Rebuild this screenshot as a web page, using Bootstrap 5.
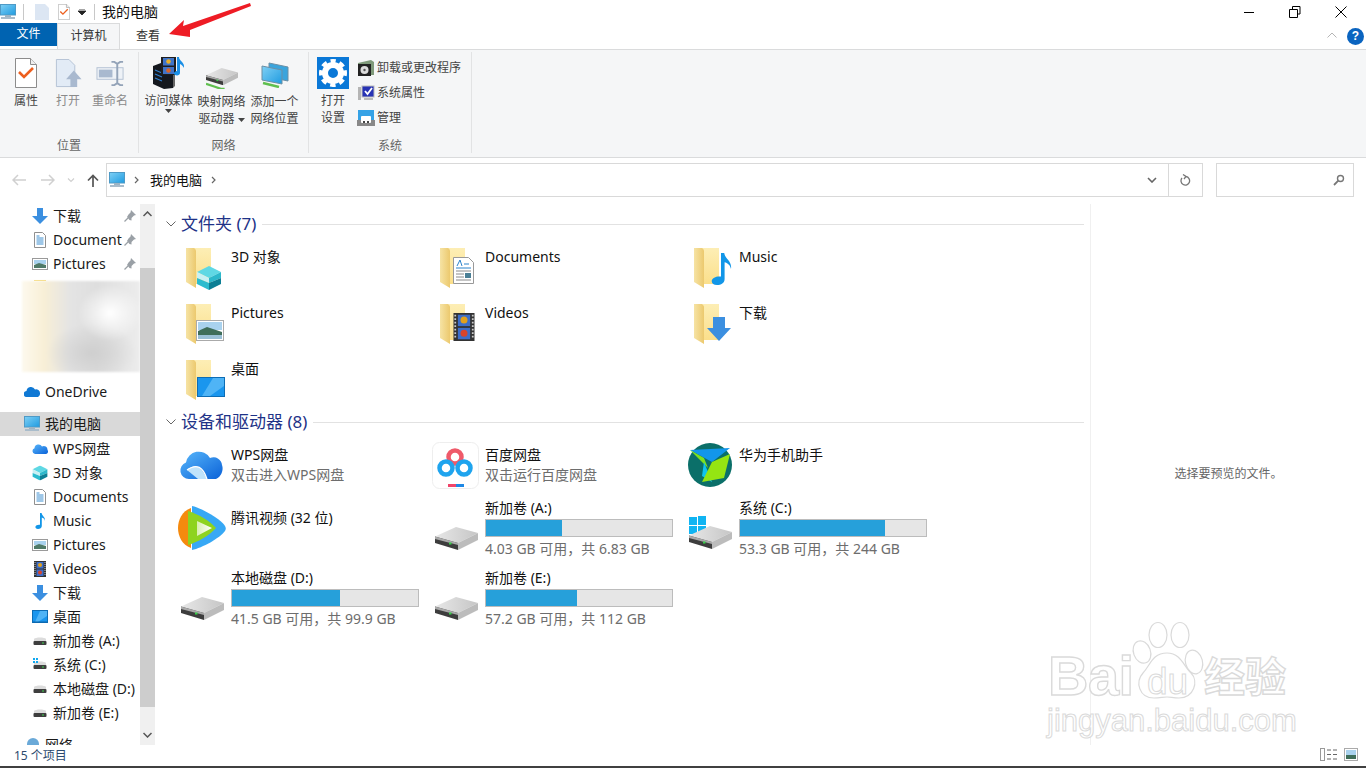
<!DOCTYPE html>
<html lang="zh-CN"><head><meta charset="utf-8"><title>我的电脑</title>
<link href="https://cdn.jsdelivr.net/npm/bootstrap@5.3.0/dist/css/bootstrap.min.css" rel="stylesheet">
<style>
html,body{height:100%;overflow:hidden;background:#fff}
body{font-family:"Noto Sans","Noto Sans CJK SC",sans-serif;font-size:14px;color:#111;line-height:20px}
.shell{width:1366px;height:768px;position:relative;overflow:hidden}
.ttl{height:24px;font-size:14px}
.ttl svg{flex:none}
.qat-sep{width:1px;height:16px;background:#c8c8c8;flex:none}
.q-a{margin-left:7px}.q-b{margin-left:11px}.q-c{margin-left:8px}.q-d{margin-left:7px}.q-e{margin-left:8px}.q-f{margin-left:7px}
.cap-m{margin-left:auto;margin-right:34px}.cap-x{margin-left:34px}.cap-end{width:19px}
.tabs{height:26px;border-bottom:1px solid #dadbdc;font-size:12px}
.tab-file{width:57px;height:23px;background:#0063b1;color:#fff;text-align:center;line-height:22px;margin-top:-1px}
.tab-on{width:63px;height:26px;background:#f5f6f7;border:1px solid #dadbdc;border-bottom:0;text-align:center;line-height:24px;color:#333;position:relative;z-index:1;margin-top:-1px}
.tab-off{width:56px;text-align:center;line-height:24px;color:#333}
.help{width:17px;height:17px;border-radius:50%;background:#0a64c0;color:#fff;font:700 12px/17px "Liberation Sans",sans-serif;text-align:center;margin:0 2px 0 10px}
.rib{height:108px;background:#f5f6f7;border-bottom:1px solid #dadbdc;font-size:12px;line-height:17px;color:#444}
.rgrp{height:101px;border-right:1px solid #e2e3e4;margin-top:2px;position:relative}
.rgrp-cap{position:absolute;left:0;right:0;bottom:-1px;text-align:center;color:#666}
.rbtn{text-align:center;flex:none}
.rico{height:37px;margin-top:3px}
.rico svg{display:block;margin:0 auto}
.pad1{padding-top:1px}.pad2{padding-top:2px}.pad3{padding-top:3px}.pad4{padding-top:4px}.pad7{padding-top:7px}.pad13{padding-top:13px}
.dim{color:#8a8a8a}
.w42{width:42px}.w53{width:53px}.w40{width:40px}
.rg1{width:139px;padding-left:5px}.rg2{width:170px;padding-left:3px}.rg3{width:163px;padding-left:4px}
.rsm-col{margin-left:4px;padding-top:3px}
.rsm{height:25px;gap:2px;white-space:nowrap}
.rb-tx{margin-top:1px}
.caret-b{display:block;margin:0 auto}
.caret-i{display:inline;vertical-align:middle}
.nav-row{height:46px;padding-top:5px}
.nv{width:101px;height:34px;padding-left:12px}.nv svg{flex:none}.nv svg:nth-child(2){margin-left:15px}.nv svg:nth-child(3){margin-left:12px}.nv svg:nth-child(4){margin-left:12px}
.addr{height:34px;width:1097px;margin-left:5px;border:1px solid #d9d9d9;font-size:13px}
.a-pc{margin-left:1px}.a-ch{margin-left:8px}.a-t{margin-left:11px}.a-ch2{margin-left:9px}.a-dd{margin-left:auto;margin-right:11px}
.addr-end{width:34px;height:32px;border-left:1px solid #d9d9d9}
.srch{height:34px;width:138px;margin-left:13px;border:1px solid #d9d9d9}
.work{height:541px;overflow:hidden}
.tree{width:140px;flex:none;overflow:hidden;color:#1a1a1a}
.trow{height:24px;line-height:24px;padding-left:32px;gap:5px;white-space:nowrap;overflow:hidden;position:relative}
.trow svg{flex:none}
.lvl1{padding-left:24px}
.sel{background:#d9d9d9}
.mt-px{margin-top:1px}
.pin{position:absolute;left:123px;top:5px;background:#fff}
.sliver{height:1px;width:12px;margin:4px 0 0 34px;background:#f5d76e}
.blur-box{height:91px;margin:0 0 8px 22px;background:radial-gradient(ellipse 32px 28px at 88px 32px,#fff,transparent),radial-gradient(ellipse 45px 30px at 70px 72px,#cfcfcf,transparent),linear-gradient(90deg,#fdf9ee 0,#f8efd6 22px,#e4e4e4 48px,#dedede 75px,#ececec 117px);filter:blur(1px)}
.sbar{width:15px;flex:none;background:#f0f0f0;margin-right:1px;position:relative}
.sthumb{height:439px;margin-top:64px;background:#cdcdcd}
.sarrow{position:absolute;left:3px}
.t-a{top:7px}.b-a{bottom:7px}
.main{width:934px;flex:none;padding-top:10px}
.grp-h{height:20px;font-size:17px;color:#1e3287;line-height:20px;white-space:nowrap}
.hch{margin:0 5px 0 10px}
.grp-line{height:1px;background:#e2e2e2;flex:1;margin:0 6px}
.ftiles{display:grid;grid-template-columns:repeat(3,254px);grid-auto-rows:56px;margin:10px 0 0 22px}
.dtiles{display:grid;grid-template-columns:repeat(3,254px);grid-template-rows:58px 70px 70px;margin:8px 0 0 22px}
.itm{display:flex;min-width:0}
.itm>svg{flex:none}
.itm-t{padding-top:3px;color:#111}
.itm-d{width:188px}
.sub{color:#6d6d6d}
.pbar{height:18px;background:#e6e6e6;border:1px solid #bcbcbc;margin:1px 0 2px}
.pfill{height:100%;background:#26a0da}
.ptop{padding-top:5px}
.ptop2{padding-top:10px}
.preview{flex:1;border-left:1px solid #f0f0f0;font-size:12px;color:#666;padding-bottom:2px}
.stat{height:21px;font-size:12px;line-height:21px;color:#2c4a6e;padding-left:14px;position:relative}
.base{height:2px;background:#404040}
.ovl{position:absolute;pointer-events:none}
.wm{left:1040px;top:620px;width:270px;height:125px}
.wm span{position:absolute;color:#fff;-webkit-text-stroke:1.4px #dadada;font-family:"Liberation Sans",sans-serif;font-weight:700;line-height:1}
.wm .wm-bai{left:8px;top:32px;font-size:56px;letter-spacing:-.5px;line-height:.85}
.wm .wm-du{left:107px;top:43px;font-size:37px;font-weight:400;-webkit-text-stroke:1px #dadada}
.wm .wm-cn{left:164px;top:30px;font-size:41px;font-family:"Noto Sans CJK SC",sans-serif;line-height:1.2}
.wm .wm-url{left:7px;top:85px;font-size:31px;font-weight:400;-webkit-text-stroke:1px #dadada}
.arrow{left:165px;top:0}
.vsw{position:absolute;left:1320px;top:3px}
</style></head><body>
<svg width="0" height="0" class="position-absolute">
<defs>
<linearGradient id="gSc" x1="0" y1="0" x2="1" y2="1"><stop offset="0" stop-color="#7fd0f5"/><stop offset="1" stop-color="#1f9be0"/></linearGradient>
<linearGradient id="gFo" x1="0" y1="0" x2="1" y2="0"><stop offset="0" stop-color="#f6e3a4"/><stop offset="1" stop-color="#ecc96e"/></linearGradient>
<linearGradient id="gFl" x1="0" y1="0" x2="0" y2="1"><stop offset="0" stop-color="#fdeeb5"/><stop offset="1" stop-color="#fbdf8b"/></linearGradient>
<linearGradient id="gWps" x1="0" y1="0" x2="1" y2="1"><stop offset="0" stop-color="#58b7fb"/><stop offset="1" stop-color="#0b62d8"/></linearGradient>
<linearGradient id="gDr" x1="0" y1="0" x2="1" y2="0"><stop offset="0" stop-color="#e7e7e7"/><stop offset="1" stop-color="#c6c6c6"/></linearGradient>
<linearGradient id="gPlay" x1="0" y1="0" x2="1" y2="0"><stop offset="0" stop-color="#d9efb0"/><stop offset="1" stop-color="#fff"/></linearGradient>
</defs>
<symbol id="pc" viewBox="0 0 16 16"><rect x="0.5" y="0.5" width="15" height="10.5" fill="url(#gSc)" stroke="#4f9ac6"/><rect x="5" y="11" width="6" height="2" fill="#9db4c4"/><rect x="1" y="13" width="14" height="2" fill="#a9bccb"/></symbol>
<symbol id="doc" viewBox="0 0 16 16"><path d="M2.5.5h8l3 3v12h-11z" fill="#fff" stroke="#8f8f8f"/><path d="M4.5 4h3M4.5 6h7M4.5 8h7M4.5 10h7M4.5 12h7" stroke="#3f8fd0"/></symbol>
<symbol id="pics" viewBox="0 0 16 16"><rect x=".5" y="2.5" width="15" height="11" fill="#fff" stroke="#9a9a9a"/><rect x="2" y="4" width="12" height="4" fill="#a9d2ee"/><path d="M2 9l5-2 7 2v3H2z" fill="#4f7a68"/></symbol>
<symbol id="down" viewBox="0 0 16 16"><path d="M5 0h6v8h5l-8 8-8-8h5z" fill="#3b8fe0"/></symbol>
<symbol id="music" viewBox="0 0 16 16"><path d="M8 0h1.6c.4 3 4 4 3.4 8-.3-2-1.800-3-3.200-3.400V13c0 2-1.800 3-3.800 3-1.800 0-2.800-1-2.600-2.200.3-1.400 2.400-2.400 4.600-2z" fill="#1296e8"/></symbol>
<symbol id="film" viewBox="0 0 16 16"><rect x="2" y="0" width="12" height="16" fill="#333"/><rect x="4.500" y="1" width="7" height="6.500" fill="#3d6ec9"/><rect x="4.500" y="8.500" width="7" height="6.500" fill="#3d6ec9"/><circle cx="8" cy="4" r="2" fill="#e3a11b"/><circle cx="8" cy="11.500" r="2" fill="#d8442b"/><path d="M3 1v14M13 1v14" stroke="#ccc" stroke-dasharray="1 1"/></symbol>
<symbol id="desk" viewBox="0 0 16 16"><rect x=".5" y="1.500" width="15" height="12" fill="#1a96ee" stroke="#0d6db5"/><path d="M8 2h7v5l-9 6H3z" fill="#4fb4f6"/><rect x="1" y="12.500" width="14" height="1" fill="#0c67ab"/></symbol>
<symbol id="cube" viewBox="0 0 26 24"><path d="M13 0l12 6-12 6L1 6z" fill="#5fd8e4"/><path d="M1 6l12 6v5L1 12z" fill="#c8f0f3"/><path d="M25 6l-12 6v5l12-5z" fill="#2cb8cb"/><path d="M1 12l12 5v7L1 18z" fill="#2bbccf"/><path d="M25 12l-12 5v7l12-6z" fill="#0c7f95"/></symbol>
<symbol id="folder" viewBox="0 0 25 40"><path d="M0 0h25v36H9z" fill="url(#gFl)"/><path d="M0 0h8c-.5 0 2 1 2 3v37L0 34z" fill="url(#gFo)"/></symbol>
<symbol id="drvb" viewBox="0 0 43 23"><path d="M0 9.500L21 0l22 6-20 10z" fill="url(#gDr)"/><path d="M0 9.500l23 6.500v7L0 16z" fill="#3d3d3d"/><path d="M0 9.500l23 6.500v2L0 12z" fill="#a9a9a9"/><path d="M23 16l20-10v7L23 23z" fill="#bcbcbc"/><rect x="14" y="15.500" width="2.500" height="2" fill="#38d04a"/></symbol>
<symbol id="drvs" viewBox="0 0 16 16"><path d="M2 6c1-2 11-2 12 0v2H2z" fill="#dcdcdc"/><rect x="1.500" y="8" width="13" height="4" rx="1" fill="#3e3e3e"/><rect x="10" y="9.500" width="2" height="1" fill="#3fd24e"/></symbol>
<symbol id="pinx" viewBox="0 0 14 14"><path d="M8 1l5 5-2 .5-2.500 2.500 0 2.500-2-.5L4 8 5.500 5.500 7.500 3.500z" fill="#9aa0a6"/><path d="M5 9l-3.500 3.500" stroke="#9aa0a6" stroke-width="1.300"/></symbol>
<symbol id="chk" viewBox="0 0 22 30"><path d="M.5.500h15l6 6v23H.500z" fill="#fff" stroke="#8c8c8c"/><path d="M15.500.5v6h6" fill="#eee" stroke="#8c8c8c"/><path d="M4 14l5 5 9-9" fill="none" stroke="#ed5f1e" stroke-width="2.600"/></symbol>
</svg>
<div class="shell d-flex flex-column">
 <div class="ttl d-flex align-items-center">
  <svg width="16" height="16"><use href="#pc"/></svg>
  <span class="qat-sep q-a"></span>
  <svg width="14" height="16" class="q-b" viewBox="0 0 14 16"><path d="M0 0h10l4 4v12H0z" fill="#dce6f3"/></svg>
  <svg width="14" height="16" class="q-c" viewBox="0 0 22 30"><use href="#chk" width="22" height="30"/></svg>
  <svg width="8" height="6" class="q-d" viewBox="0 0 8 6"><path d="M1 0h6M0 2h8l-4 4z" stroke="#222" stroke-width=".8" fill="#222"/></svg>
  <span class="qat-sep q-e"></span>
  <span class="q-f">我的电脑</span>
  <svg class="cap-m" width="11" height="11" viewBox="0 0 11 11"><path d="M0 5.500h10" stroke="#000"/></svg>
  <svg width="12" height="12" viewBox="0 0 12 12"><path d="M3.500 3V.5h7.500v7.500H8.500M.5 3.500h8v8h-8z" fill="none" stroke="#000"/></svg>
  <svg class="cap-x" width="12" height="12" viewBox="0 0 12 12"><path d="M.5.500l11 11M11.500.500l-11 11" stroke="#000"/></svg>
  <span class="cap-end"></span>
 </div>
 <div class="tabs d-flex align-items-start">
  <div class="tab-file">文件</div><div class="tab-on">计算机</div><div class="tab-off">查看</div>
  <svg class="ms-auto mt-2" width="10" height="6" viewBox="0 0 10 6"><path d="M.5 5.500L5 1l4.500 4.500" fill="none" stroke="#b5b5b5"/></svg>
  <div class="help mt-1">?</div>
 </div>
 <div class="rib d-flex">
  <div class="rgrp d-flex rg1">
   <div class="rbtn w42"><div class="rico pad3"><svg width="22" height="30" viewBox="0 0 22 30"><use href="#chk" width="22" height="30"/></svg></div>属性</div>
   <div class="rbtn w42 dim"><div class="rico pad4"><svg width="28" height="29" viewBox="0 0 28 30"><path d="M2 .500h13l6 6v22H2z" fill="#e2ebf6" stroke="#b4c2d4"/><path d="M20 12l8 9h-4.500v8h-7v-8H12z" fill="#a9b9cf"/></svg></div>打开</div>
   <div class="rbtn w42 dim"><div class="rico pad4"><svg width="29" height="29" viewBox="0 0 30 30"><rect x="1" y="9" width="27" height="12" fill="#eef2f7" stroke="#b4c2d4"/><rect x="3" y="11" width="14" height="8" fill="#a9b9cf"/><path d="M16 3h3l3 2 3-2h3M22 5v20M16 27h3l3-2 3 2h3" fill="none" stroke="#93a3b8" stroke-width="2"/></svg></div>重命名</div>
   <div class="rgrp-cap">位置</div>
  </div>
  <div class="rgrp d-flex rg2">
   <div class="rbtn w53"><div class="rico pad1"><svg width="33" height="33" viewBox="0 0 33 33"><path d="M1 10l8-3 12 4v21l-9 1-11-5z" fill="#14181e"/><path d="M21 11l2-1v20l-2 2z" fill="#666"/><path d="M3 14l7 3M3 18l7 3M3 22l7 3" stroke="#2f7fd0" stroke-width="1.200"/><rect x="9" y="1" width="15" height="18" fill="#1e1e1e"/><rect x="11" y="2" width="11" height="7.500" fill="#3f74c9"/><rect x="11" y="11" width="11" height="7" fill="#3f74c9"/><circle cx="16.500" cy="5.500" r="2.300" fill="#e8b02a"/><circle cx="16.500" cy="14.500" r="2.300" fill="#d9642b"/><path d="M25 1h2c0 4 6 5 5 11-1-2-2-3-4-4v9c0 3-5 3-6 1-.5-2 2-3 3-3z" fill="#1a8fe6"/></svg></div>访问媒体<svg class="caret-b" width="7" height="4" viewBox="0 0 7 4"><path d="M0 0h7L3.500 4z" fill="#444"/></svg></div>
   <div class="rbtn w53"><div class="rico pad13"><svg width="32" height="21" viewBox="0 0 43 28"><use href="#drvb" width="43" height="23"/><path d="M0 21l12 4 8 3h5" stroke="#5fbf4e" stroke-width="3" fill="none"/></svg></div><div class="rb-tx">映射网络<br>驱动器 <svg class="caret-i" width="7" height="4" viewBox="0 0 7 4"><path d="M0 0h7L3.500 4z" fill="#444"/></svg></div></div>
   <div class="rbtn w53"><div class="rico pad7"><svg width="28" height="26" viewBox="0 0 28 26"><path d="M8 1l19 4v14L8 15z" fill="#3aa4dc" stroke="#6b8fa5"/><path d="M1 4l20 4v14L1 18z" fill="url(#gSc)" stroke="#6b8fa5"/><path d="M2 21l16 4" stroke="#5fbf4e" stroke-width="2.500"/></svg></div><div class="rb-tx">添加一个<br>网络位置</div></div>
   <div class="rgrp-cap">网络</div>
  </div>
  <div class="rgrp d-flex rg3">
   <div class="rbtn w40"><div class="rico pad2"><svg width="32" height="32" viewBox="0 0 32 32"><rect width="32" height="32" fill="#0a78d7"/><circle cx="16" cy="16" r="8" fill="none" stroke="#fff" stroke-width="6"/><circle cx="16" cy="16" r="12" fill="none" stroke="#fff" stroke-width="4" stroke-dasharray="5.400 4" stroke-dashoffset="2.700" transform="rotate(-90 16 16)"/></svg></div>打开<br>设置</div>
   <div class="rsm-col">
    <div class="rsm d-flex align-items-center"><svg width="18" height="18" viewBox="0 0 18 18"><path d="M1 4l13-3 3 2v13H1z" fill="#7f9a7a"/><rect x="1" y="5" width="13" height="12" fill="#222"/><circle cx="7.500" cy="11" r="4" fill="#dcdcdc"/><circle cx="7.500" cy="11" r="1.200" fill="#555"/></svg>卸载或更改程序</div>
    <div class="rsm d-flex align-items-center"><svg width="18" height="18" viewBox="0 0 18 18"><rect x="1" y="3" width="3" height="13" fill="#b5b5b5"/><rect x="5" y="2" width="12" height="11" fill="#2733b5" stroke="#bbb"/><path d="M8 7l2.500 3L15 4" stroke="#fff" stroke-width="1.800" fill="none"/><rect x="7" y="14" width="9" height="2" fill="#bbb"/></svg>系统属性</div>
    <div class="rsm d-flex align-items-center"><svg width="18" height="18" viewBox="0 0 18 18"><rect x="1" y="1" width="16" height="10" fill="#35a2e6"/><path d="M0 11h18v6H0z" fill="#888"/><rect x="4" y="7" width="10" height="7" rx="1" fill="#fff"/><rect x="6" y="12" width="2" height="2" fill="#444"/><rect x="10" y="12" width="2" height="2" fill="#444"/></svg>管理</div>
   </div>
   <div class="rgrp-cap">系统</div>
  </div>
 </div>
 <div class="nav-row d-flex">
  <div class="nv d-flex align-items-center">
   <svg width="14" height="12" viewBox="0 0 14 12"><path d="M6 1L1 6l5 5M1 6h13" fill="none" stroke="#d0d0d0" stroke-width="1.500"/></svg>
   <svg width="14" height="12" viewBox="0 0 14 12"><path d="M8 1l5 5-5 5M13 6H0" fill="none" stroke="#d0d0d0" stroke-width="1.500"/></svg>
   <svg width="8" height="5" viewBox="0 0 8 5"><path d="M1 .5l3 3 3-3" fill="none" stroke="#d0d0d0" stroke-width="1.200"/></svg>
   <svg width="12" height="13" viewBox="0 0 12 13"><path d="M1 6.500L6 1.500l5 5M6 1.500V13" fill="none" stroke="#555" stroke-width="1.700"/></svg>
  </div>
  <div class="addr d-flex align-items-center">
   <svg width="18" height="16" class="a-pc" viewBox="0 0 16 16"><use href="#pc" width="16" height="16"/></svg>
   <svg width="5" height="8" class="a-ch" viewBox="0 0 5 8"><path d="M1 1l3 3-3 3" fill="none" stroke="#666" stroke-width="1.200"/></svg>
   <span class="a-t">我的电脑</span>
   <svg width="5" height="8" class="a-ch2" viewBox="0 0 5 8"><path d="M1 1l3 3-3 3" fill="none" stroke="#666" stroke-width="1.200"/></svg>
   <svg class="a-dd" width="10" height="6" viewBox="0 0 10 6"><path d="M1 1l4 4 4-4" fill="none" stroke="#666" stroke-width="1.600"/></svg>
   <div class="addr-end d-flex align-items-center justify-content-center"><svg width="11" height="12" viewBox="0 0 11 12"><path d="M6 2.500a4.300 4.300 0 1 1-4 1.500M3 .5l3 2-2 2.500" fill="none" stroke="#777" stroke-width="1.300"/></svg></div>
  </div>
  <div class="srch d-flex align-items-center justify-content-end pe-2"><svg width="12" height="12" viewBox="0 0 12 12"><circle cx="7.500" cy="4.500" r="3" fill="none" stroke="#777" stroke-width="1.400"/><path d="M5.300 6.700L1 11" stroke="#777" stroke-width="1.800"/></svg></div>
 </div>
 <div class="work d-flex">
  <div class="tree">
   <div class="trow d-flex align-items-center"><svg width="16" height="16"><use href="#down"/></svg>下载<svg class="pin" width="14" height="14"><use href="#pinx"/></svg></div>
   <div class="trow d-flex align-items-center"><svg width="16" height="16"><use href="#doc"/></svg>Document<svg class="pin" width="14" height="14"><use href="#pinx"/></svg></div>
   <div class="trow d-flex align-items-center"><svg width="16" height="16"><use href="#pics"/></svg>Pictures<svg class="pin" width="14" height="14"><use href="#pinx"/></svg></div>
   <div class="sliver"></div>
   <div class="blur-box"></div>
   <div class="trow lvl1 d-flex align-items-center"><svg width="16" height="16" viewBox="0 0 16 16"><path d="M3 13a3 3 0 0 1-.5-6 4.500 4.500 0 0 1 8.500-1.500A3.800 3.800 0 0 1 16 9a4 4 0 0 1-2 4z" fill="#0f78d4"/></svg>OneDrive</div>
   <div class="trow lvl1 sel mt-2 d-flex align-items-center"><svg width="16" height="16"><use href="#pc"/></svg>我的电脑</div>
   <div class="trow mt-px d-flex align-items-center"><svg width="16" height="16" viewBox="0 0 16 16"><path d="M3 13a3 3 0 0 1-.500-5.800 4 4 0 0 1 7.500-1.700 3.700 3.700 0 0 1 5.500 3.500A2.500 2.500 0 0 1 14 13z" fill="url(#gWps)"/></svg>WPS网盘</div>
   <div class="trow d-flex align-items-center"><svg width="16" height="16" viewBox="0 0 26 24"><use href="#cube" width="26" height="24"/></svg>3D 对象</div>
   <div class="trow d-flex align-items-center"><svg width="16" height="16"><use href="#doc"/></svg>Documents</div>
   <div class="trow d-flex align-items-center"><svg width="16" height="16"><use href="#music"/></svg>Music</div>
   <div class="trow d-flex align-items-center"><svg width="16" height="16"><use href="#pics"/></svg>Pictures</div>
   <div class="trow d-flex align-items-center"><svg width="16" height="16"><use href="#film"/></svg>Videos</div>
   <div class="trow d-flex align-items-center"><svg width="16" height="16"><use href="#down"/></svg>下载</div>
   <div class="trow d-flex align-items-center"><svg width="16" height="16"><use href="#desk"/></svg>桌面</div>
   <div class="trow d-flex align-items-center"><svg width="16" height="16"><use href="#drvs"/></svg>新加卷 (A:)</div>
   <div class="trow d-flex align-items-center"><svg width="16" height="16" viewBox="0 0 16 16"><use href="#drvs"/><path d="M1 1h2v2H1zM4 1h2v2H4zM1 4h2v2H1zM4 4h2v2H4z" fill="#11a8f0"/></svg>系统 (C:)</div>
   <div class="trow d-flex align-items-center"><svg width="16" height="16"><use href="#drvs"/></svg>本地磁盘 (D:)</div>
   <div class="trow d-flex align-items-center"><svg width="16" height="16"><use href="#drvs"/></svg>新加卷 (E:)</div>
   <div class="trow lvl1 mt-2 d-flex align-items-center"><svg width="16" height="16" viewBox="0 0 16 16"><circle cx="9" cy="7" r="6" fill="#6aa9d8"/><rect x="0" y="10" width="9" height="5" fill="#8fb3cc"/></svg>网络</div>
  </div>
  <div class="sbar">
   <svg class="sarrow t-a" width="9" height="6" viewBox="0 0 9 6"><path d="M.5 5L4.500 1l4 4" fill="none" stroke="#555" stroke-width="1.500"/></svg>
   <div class="sthumb"></div>
   <svg class="sarrow b-a" width="9" height="6" viewBox="0 0 9 6"><path d="M.5 1l4 4 4-4" fill="none" stroke="#555" stroke-width="1.500"/></svg>
  </div>
  <div class="main">
   <div class="grp-h d-flex align-items-center"><svg class="hch" width="10" height="6" viewBox="0 0 10 6"><path d="M.5.500L5 5 9.500.5" fill="none" stroke="#666"/></svg><span>文件夹 (7)</span><span class="grp-line"></span></div>
   <div class="ftiles">
    <div class="itm"><svg width="53" height="56"><use href="#folder" x="8" y="4" width="25" height="40"/><use href="#cube" x="18" y="22" width="26" height="24"/></svg><div class="itm-t">3D 对象</div></div>
    <div class="itm"><svg width="53" height="56"><use href="#folder" x="8" y="4" width="25" height="40"/><path d="M21.500 13.500h15l5 5v21h-20z" fill="#fff" stroke="#999"/><path d="M24 24h15" stroke="#2a83cc"/><path d="M24 27h15M24 30h8M24 33h8M24 36h15" stroke="#8a8a8a"/><path d="M25 22l3-6 2 6M32 20h5" fill="none" stroke="#2a83cc"/><rect x="33" y="29" width="6" height="5" fill="#4a7f95"/></svg><div class="itm-t">Documents</div></div>
    <div class="itm"><svg width="53" height="56"><use href="#folder" x="8" y="4" width="25" height="40"/><use href="#music" x="19" y="9" width="32" height="32"/></svg><div class="itm-t">Music</div></div>
    <div class="itm"><svg width="53" height="56"><use href="#folder" x="8" y="4" width="25" height="40"/><rect x="18.500" y="20.500" width="27" height="20" fill="#fff" stroke="#aaa"/><rect x="20" y="22" width="24" height="8" fill="#a9d2ee"/><path d="M20 31l9-4 15 5v3H20z" fill="#3f6e5a"/><rect x="20" y="35" width="24" height="4" fill="#9ac0d6"/></svg><div class="itm-t">Pictures</div></div>
    <div class="itm"><svg width="53" height="56"><use href="#folder" x="8" y="4" width="25" height="40"/><use href="#film" x="18" y="13" width="28" height="28"/></svg><div class="itm-t">Videos</div></div>
    <div class="itm"><svg width="53" height="56"><use href="#folder" x="8" y="4" width="25" height="40"/><path d="M27 17h12v11h6L33 41 21 28h6z" fill="#3b8fe0"/></svg><div class="itm-t">下载</div></div>
    <div class="itm"><svg width="53" height="56"><use href="#folder" x="8" y="4" width="25" height="40"/><rect x="19.500" y="21.500" width="27" height="19" fill="#1a96ee" stroke="#0d6db5"/><path d="M35 22h11v8L32 40h-8z" fill="#4fb4f6"/></svg><div class="itm-t">桌面</div></div>
   </div>
   <div class="grp-h d-flex align-items-center"><svg class="hch" width="10" height="6" viewBox="0 0 10 6"><path d="M.5.500L5 5 9.500.5" fill="none" stroke="#666"/></svg><span>设备和驱动器 (8)</span><span class="grp-line"></span></div>
   <div class="dtiles">
    <div class="itm"><svg width="53" height="56"><path d="M11 39a8.500 8.500 0 0 1-3-16.500A13 13 0 0 1 32 18a8.500 8.500 0 0 1 12 7c2 5-1 12-6 14z" fill="url(#gWps)"/><path d="M9 30c8-7 14-4 20 9h-9" fill="#bfe3fb"/><path d="M9 30c10-7 16-3 20 9" stroke="#fff" stroke-width="1.300" fill="none"/></svg><div class="ptop">WPS网盘<div class="sub">双击进入WPS网盘</div></div></div>
    <div class="itm"><svg width="53" height="56"><rect x=".5" y="2.500" width="46" height="46" rx="7" fill="#fff" stroke="#eee"/><circle cx="23" cy="17" r="6.500" fill="none" stroke="#ef5a6a" stroke-width="4.500"/><circle cx="14" cy="28" r="6.500" fill="none" stroke="#1fa4ee" stroke-width="4.500"/><circle cx="32" cy="28" r="6.500" fill="none" stroke="#1fa4ee" stroke-width="4.500"/><rect x="16" y="44" width="8" height="3" fill="#f0446a"/><rect x="24" y="44" width="8" height="3" fill="#1e88e5"/></svg><div class="ptop">百度网盘<div class="sub">双击运行百度网盘</div></div></div>
    <div class="itm"><svg width="53" height="56"><circle cx="24" cy="25" r="22" fill="#0b6f69"/><path d="M4 10l40-2-18 14z" fill="#1296ea"/><path d="M4 10l14 8 4 10z" fill="#7ee01e"/><path d="M18 22l8 20-10-6z" fill="#10c4ee"/><path d="M44 14l-6 24-22 4 10-20z" fill="#95e512"/></svg><div class="ptop">华为手机助手</div></div>
    <div class="itm"><svg width="53" height="60"><path d="M13 10C4 13 0 22 0 30s4 17 13 20z" fill="#f58a0e"/><path d="M14 8c10 2 30 14 33 20 1 2 1 3 0 5-5 7-23 17-33 19z" fill="#37a8f5"/><path d="M10 13c10 3 22 10 28 17-6 7-18 14-28 17z" fill="#8ed31f"/><path d="M19 23l15 7-15 8z" fill="url(#gPlay)"/></svg><div class="ptop2">腾讯视频 (32 位)</div></div>
    <div class="itm"><svg width="53" height="60"><use href="#drvb" x="3" y="29" width="43" height="23"/></svg><div class="itm-d"><div>新加卷 (A:)</div><div class="pbar"><div class="pfill" style="width:41%"></div></div><div class="sub">4.03 GB 可用，共 6.83 GB</div></div></div>
    <div class="itm"><svg width="53" height="60"><path d="M3 19h8v8H3zM12 18h8v9h-8zM3 28h8v8H3zM12 28h8v9h-8z" fill="#10b4f2"/><use href="#drvb" x="3" y="28" width="43" height="23"/></svg><div class="itm-d"><div>系统 (C:)</div><div class="pbar"><div class="pfill" style="width:78%"></div></div><div class="sub">53.3 GB 可用，共 244 GB</div></div></div>
    <div class="itm"><svg width="53" height="60"><use href="#drvb" x="3" y="29" width="43" height="23"/></svg><div class="itm-d"><div>本地磁盘 (D:)</div><div class="pbar"><div class="pfill" style="width:58%"></div></div><div class="sub">41.5 GB 可用，共 99.9 GB</div></div></div>
    <div class="itm"><svg width="53" height="60"><use href="#drvb" x="3" y="29" width="43" height="23"/></svg><div class="itm-d"><div>新加卷 (E:)</div><div class="pbar"><div class="pfill" style="width:49%"></div></div><div class="sub">57.2 GB 可用，共 112 GB</div></div></div>
   </div>
  </div>
  <div class="preview d-flex align-items-center justify-content-center">选择要预览的文件。</div>
 </div>
 <div class="stat">15 个项目
  <svg class="vsw" width="42" height="14" viewBox="0 0 42 14"><rect x=".5" y=".5" width="4" height="12" fill="#fff" stroke="#999"/><path d="M7 2h4M7 6.500h4M7 11h4M13 2h4M13 6.500h4M13 11h4" stroke="#666"/><rect x="24.500" y=".5" width="13" height="12" fill="#fff" stroke="#aaa"/><rect x="26" y="2" width="10" height="5" fill="#a9d2ee"/><rect x="26" y="7" width="10" height="4" fill="#3f6e5a"/></svg>
 </div>
 <div class="base"></div>

 <div class="ovl wm">
  <svg class="position-absolute top-0 start-0" width="270" height="125" viewBox="0 0 270 125">
   <g fill="#fff" stroke="#dadada" stroke-width="1.200">
    <ellipse cx="102" cy="32" rx="8.500" ry="11.500" transform="rotate(-20 102 32)"/>
    <ellipse cx="118" cy="15" rx="9" ry="12.500"/>
    <ellipse cx="140" cy="15" rx="9" ry="12.500"/>
    <ellipse cx="154" cy="42" rx="8.500" ry="12" transform="rotate(-15 154 42)"/>
    <path d="M127 33c14 0 17 14 24 20 8 8 3 25-12 25-6 0-8-1-12-1s-7 1-13 1c-15 0-19-16-11-25 7-7 9-20 24-20z"/>
   </g>
  </svg>
  <span class="wm-bai">Bai</span><span class="wm-du">du</span><span class="wm-cn">经验</span><span class="wm-url">jingyan.baidu.com</span>
 </div>
 <svg class="ovl arrow" width="90" height="40" viewBox="165 0 90 40"><path d="M169 34l15-14-1 6 67-23 1 3-61 24 0 7z" fill="#ee1c25"/></svg>
</div>
</body></html>
